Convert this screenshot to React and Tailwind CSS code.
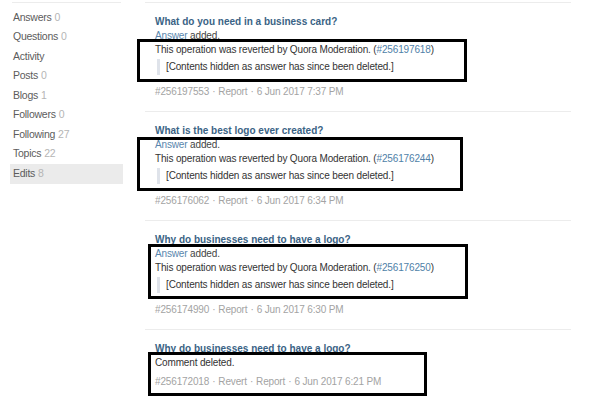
import React from 'react';

const sideItems = [
  { label: 'Answers', count: '0' },
  { label: 'Questions', count: '0' },
  { label: 'Activity', count: '' },
  { label: 'Posts', count: '0' },
  { label: 'Blogs', count: '1' },
  { label: 'Followers', count: '0' },
  { label: 'Following', count: '27' },
  { label: 'Topics', count: '22' },
  { label: 'Edits', count: '8', active: true },
];

const edits = [
  {
    id: 'e1',
    title: 'What do you need in a business card?',
    revision: '#256197618',
    footer: ['#256197553', 'Report', '6 Jun 2017 7:37 PM'],
  },
  {
    id: 'e2',
    title: 'What is the best logo ever created?',
    revision: '#256176244',
    footer: ['#256176062', 'Report', '6 Jun 2017 6:34 PM'],
  },
  {
    id: 'e3',
    title: 'Why do businesses need to have a logo?',
    revision: '#256176250',
    footer: ['#256174990', 'Report', '6 Jun 2017 6:30 PM'],
  },
];

const Footer = ({ parts, className = '' }) => (
  <div className={`leading-[14px] text-[#a3a3a3] ${className}`}>
    {parts.map((p, i) => (
      <span key={i}>
        {i > 0 && <span className="mx-[3px]">·</span>}
        {p}
      </span>
    ))}
  </div>
);

const EditItem = ({ edit }) => (
  <div className="border-t border-[#ececec] pt-[12px] pb-[12px] pl-[10px]">
    <div className="font-bold leading-[14px] tracking-[0px] text-[#3a6385]">{edit.title}</div>
    <div className="leading-[14px] text-[#444]">
      <span className="text-[#5a86ad]">Answer</span> added.
    </div>
    <div className="leading-[14px] text-[#333]">
      This operation was reverted by Quora Moderation. (
      <span className="text-[#4f7fa8]">{edit.revision}</span>)
    </div>
    <div className="mt-[2px] ml-[2px] border-l-[3px] border-[#dfe3ea] py-[1px] pl-[6px] leading-[14px] text-[#333]">
      [Contents hidden as answer has since been deleted.]
    </div>
    <Footer parts={edit.footer} className="mt-[10px]" />
  </div>
);

export default function App() {
  return (
    <div
      className="relative h-[404px] w-[589px] overflow-hidden bg-white text-[10px] tracking-[-0.15px]"
      style={{ fontFamily: '"Liberation Sans", Arial, sans-serif' }}
    >
      <div className="flex">
        {/* Sidebar */}
        <div className="ml-[10px] w-[113px] pt-[2px]">
          <div className="mx-[2px] border-t border-[#ececec] pt-[5px]">
            {sideItems.map((item) => (
              <div
                key={item.label}
                className={`-mx-[2px] flex h-[19.5px] items-center px-[3px] text-[10.5px] tracking-[-0.25px] text-[#5c5c5c] ${
                  item.active ? 'bg-[#ebebeb]' : ''
                }`}
              >
                {item.label}
                {item.count && <span className="ml-[3px] text-[#b5b5b5]">{item.count}</span>}
              </div>
            ))}
          </div>
        </div>

        {/* Edits list */}
        <div className="ml-[22px] w-[426px] pt-[2px]">
          {edits.map((e) => (
            <EditItem key={e.id} edit={e} />
          ))}
          <div className="border-t border-[#ececec] pt-[12px] pl-[10px]">
            <div className="font-bold leading-[14px] tracking-[0px] text-[#3a6385]">
              Why do businesses need to have a logo?
            </div>
            <div className="leading-[14px] text-[#333]">Comment deleted.</div>
            <Footer
              parts={['#256172018', 'Revert', 'Report', '6 Jun 2017 6:21 PM']}
              className="mt-[5px]"
            />
          </div>
        </div>
      </div>

      {/* annotation boxes drawn over the screenshot */}
      <div className="absolute left-[137px] top-[39px] h-[43px] w-[330px] border-[3px] border-black" />
      <div className="absolute left-[137px] top-[137px] h-[54px] w-[326px] border-[3px] border-black" />
      <div className="absolute left-[148px] top-[244px] h-[55px] w-[320px] border-[3px] border-black" />
      <div className="absolute left-[148px] top-[352px] h-[44px] w-[279px] border-[3px] border-black" />
    </div>
  );
}
